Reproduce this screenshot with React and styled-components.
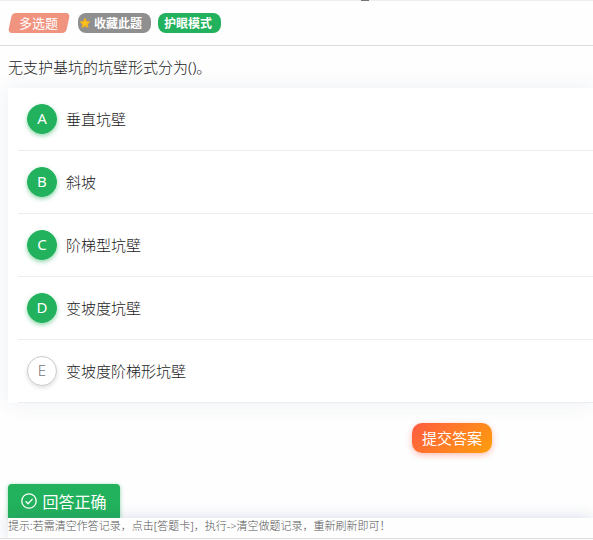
import React, { useState } from 'react';
import styled, { createGlobalStyle } from 'styled-components';

const options = [
   { key: 'A', text: '垂直坑壁' },
   { key: 'B', text: '斜坡' },
   { key: 'C', text: '阶梯型坑壁' },
   { key: 'D', text: '变坡度坑壁' },
   { key: 'E', text: '变坡度阶梯形坑壁' },
];

const App = () => {

   const [selected, setSelected] = useState(['A', 'B', 'C', 'D']);

   const toggle = key => setSelected(
      selected.includes(key) ? selected.filter(k => k !== key) : [...selected, key]
   );

   return (
      <Page>
         <GlobalStyle />
         <TopEdge><Handle /></TopEdge>
         <Toolbar>
            <TypeTag><span>多选题</span></TypeTag>
            <PillButton $bg="#8f8f8f" $icon>
               <Star viewBox="0 0 24 24" aria-hidden="true">
                  <path d="M12 1.500l3.200 6.900 7.500.9-5.500 5.200 1.400 7.500L12 18.300l-6.600 3.700 1.400-7.500L1.300 9.300l7.500-.9z" />
               </Star>
               收藏此题
            </PillButton>
            <PillButton $bg="#22b15c">护眼模式</PillButton>
         </Toolbar>

         <Question>无支护基坑的坑壁形式分为()。</Question>

         <OptionCard>
            {options.map(({ key, text }) => (
               <Option key={key}>
                  <HiddenCheckbox
                     type="checkbox"
                     checked={selected.includes(key)}
                     onChange={() => toggle(key)}
                  />
                  <Mark>{key}</Mark>
                  <OptionText>{text}</OptionText>
               </Option>
            ))}
         </OptionCard>

         <SubmitRow>
            <SubmitButton>提交答案</SubmitButton>
         </SubmitRow>

         <Result>
            <CheckIcon viewBox="0 0 16 16" aria-hidden="true">
               <circle cx="8" cy="8" r="7.2" />
               <path d="M4.600 8.200l2.500 2.500 4.500-4.800" />
            </CheckIcon>
            回答正确
         </Result>
         <Hint>提示:若需清空作答记录，点击[答题卡]，执行-&gt;清空做题记录，重新刷新即可！</Hint>
         <BottomLine />
      </Page>
   )
}

export default App;

const GlobalStyle = createGlobalStyle`
   * {
      box-sizing: border-box;
   }
   body {
      background: #fefefe;
      color: #1c1c1c;
      font-family: "Noto Sans", "Noto Sans CJK SC", sans-serif;
      font-size: 15px;
      font-weight: 300;
      margin: 0;
   }
   button {
      border: none;
      cursor: pointer;
      font-family: inherit;
      font-weight: inherit;
   }
`;

const Page = styled.main`
   overflow: hidden;
`;

const TopEdge = styled.div`
   background: #eee;
   height: 1px;
   padding-left: 361px;
`;

const Handle = styled.div`
   background: #777;
   height: 1px;
   width: 8px;
`;

const Toolbar = styled.header`
   align-items: center;
   border-bottom: 1px solid #ddd;
   display: flex;
   gap: 7px;
   height: 45px;
   padding: 0 8px;
`;

const TypeTag = styled.span`
   align-items: center;
   color: white;
   display: flex;
   font-size: 13px;
   font-weight: normal;
   height: 20px;
   justify-content: center;
   padding: 0 2px 2px 0;
   position: relative;
   width: 63px;
   &::before {
      background: #f0937f;
      border-radius: 4px;
      content: '';
      inset: 0 3px 0 2px;
      position: absolute;
      transform: skewX(-12deg);
   }
   span {
      position: relative;
   }
`;

const PillButton = styled.button`
   align-items: center;
   background: ${props => props.$bg};
   border-radius: 8px;
   color: white;
   display: flex;
   font-size: 12px;
   font-weight: bold;
   gap: 4px;
   height: 20px;
   padding: 0 9px 0 ${props => props.$icon ? '2px' : '6px'};
`;

const Star = styled.svg`
   fill: #fcc419;
   flex: none;
   height: 10px;
   overflow: visible;
   stroke: #f0b020;
   stroke-linejoin: round;
   stroke-width: 3;
   width: 10px;
`;

const Question = styled.h1`
   font-size: 15px;
   font-weight: inherit;
   line-height: 42px;
   margin: 0;
   padding: 0 8px;
`;

const OptionCard = styled.section`
   background: white;
   box-shadow: 0 0 20px rgba(40, 70, 110, 0.08);
   margin-left: 8px;
   padding-left: 10px;
`;

const Option = styled.label`
   align-items: center;
   border-bottom: 1px solid #ebedef;
   cursor: pointer;
   display: flex;
   gap: 9px;
   height: 63px;
   padding-left: 9px;
   position: relative;
`;

const OptionText = styled.span`
   padding-bottom: 2px;
`;

const Mark = styled.span`
   align-items: center;
   background: white;
   border: 1px solid #ccc;
   border-radius: 50%;
   box-shadow: 0 2px 4px rgba(0, 0, 0, 0.12);
   color: #777;
   display: flex;
   font-size: 15px;
   height: 30px;
   justify-content: center;
   padding-bottom: 2px;
   width: 30px;
`;

const HiddenCheckbox = styled.input`
   height: 30px;
   margin: 0;
   opacity: 0;
   position: absolute;
   width: 30px;
   &:checked + ${Mark} {
      background: #22b15c;
      border-color: #22b15c;
      box-shadow: 0 2px 4px rgba(34, 177, 92, 0.5);
      color: white;
      font-weight: normal;
   }
`;

const SubmitRow = styled.div`
   display: flex;
   justify-content: flex-end;
   padding: 20px 101px 31px 8px;
`;

const SubmitButton = styled.button`
   background: linear-gradient(135deg, #ff5b40, #ff9f0c);
   border-radius: 10px;
   box-shadow: 0 2px 6px rgba(255, 91, 64, 0.4);
   color: white;
   font-size: 15px;
   font-weight: normal;
   height: 30px;
   padding: 0 0 2px;
   width: 80px;
`;

const Result = styled.div`
   align-items: center;
   background: #22b15c;
   border-radius: 4px 4px 0 0;
   box-shadow: 0 1px 4px rgba(34, 177, 92, 0.5);
   color: white;
   display: flex;
   font-size: 16px;
   font-weight: normal;
   gap: 5px;
   height: 34px;
   justify-content: center;
   margin-left: 8px;
   width: 112px;
`;

const CheckIcon = styled.svg`
   fill: none;
   height: 16px;
   stroke: white;
   stroke-width: 1.3;
   width: 16px;
`;

const Hint = styled.p`
   background: #fefefe;
   box-shadow: 0 0 16px rgba(60, 80, 140, 0.2);
   color: #555;
   font-size: 11px;
   height: 20px;
   line-height: 16px;
   margin: 0 0 0 8px;
`;

const BottomLine = styled.footer`
   background: #fefefe;
   border-top: 1px solid #ddd;
   height: 2px;
   position: relative;
`;
